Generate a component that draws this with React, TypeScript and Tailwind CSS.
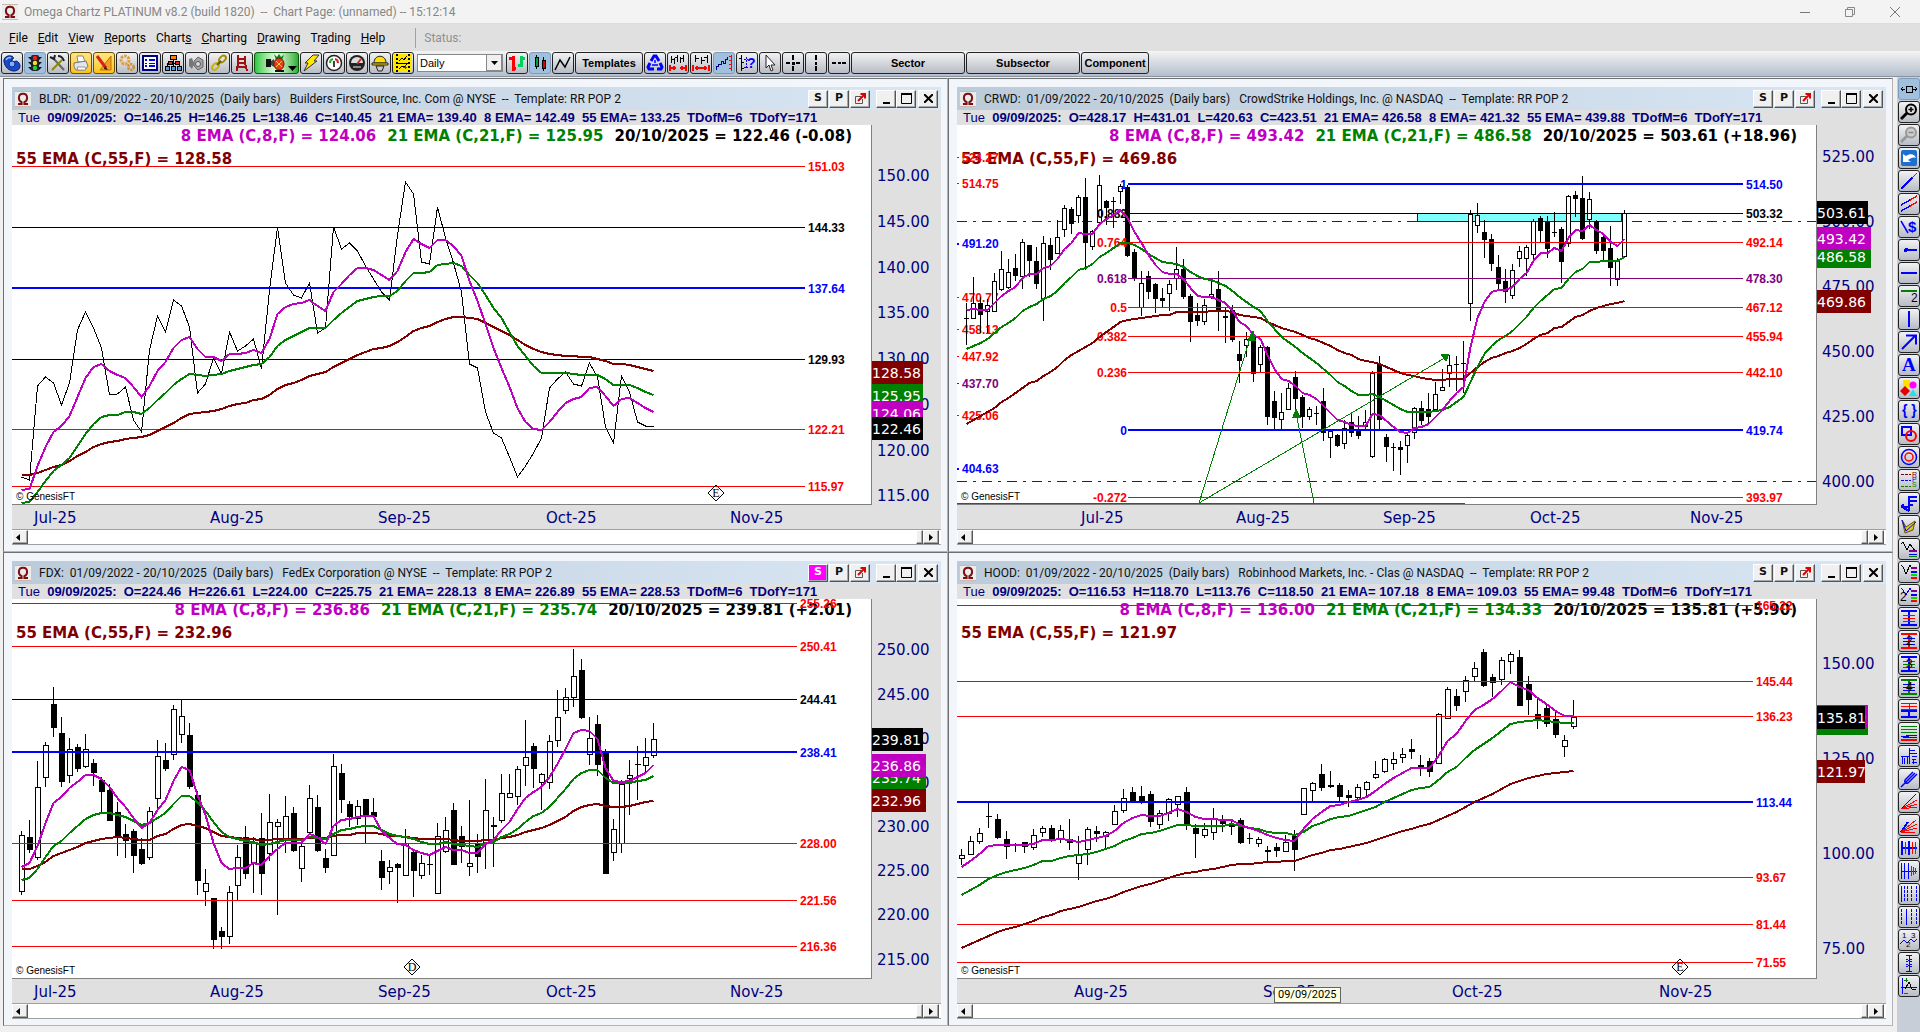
import type { ReactNode } from 'react';

type Candle = [high: number, top: number, bottom: number, low: number, down: 0 | 1];
type Level = { y: number; color: string; label: string; ratio?: string; bold?: boolean };
type Tag = { y: number; text: string; color: string; width: number };
type Mark = { x: number; letter: string };

type Chart = {
  symbol: string;
  name: string;
  info: string;
  flagged?: boolean;
  ema8: string;
  ema21: string;
  ema55: string;
  last: string;
  origin: number;
  firstX: number;
  step: number;
  bodyWidth: number;
  closes?: number[];
  candles?: Candle[];
  fast: number[];
  mid: number[];
  slow: number[];
  lineStart: number;
  lineEnd: number;
  levels: Level[];
  leftLevels?: Level[];
  axis: { y: number; perUnit: number; price: number; major: number; minor: number; from: number; to: number };
  tags: Tag[];
  months: { x: number; text: string }[];
  marks: Mark[];
  annotated?: boolean;
  tooltip?: string;
};

const MAGENTA = '#c000c0';
const GREEN = '#008000';
const MAROON = '#800000';
const RED = '#ff0000';
const BLUE = '#0000ff';
const NAVY = '#000080';
const PURPLE = '#800080';

// Series values are stored at three units per pixel, measured down from each chart's origin.
const CHARTS: Chart[] = [
  {
    symbol: 'BLDR',
    name: 'Builders FirstSource, Inc. Com @ NYSE',
    info: 'O=146.25  H=146.25  L=138.46  C=140.45  21 EMA= 139.40  8 EMA= 142.49  55 EMA= 133.25  TDofM=6  TDofY=171',
    ema8: '124.06', ema21: '125.95', ema55: '128.58', last: '122.46 (-0.08)',
    origin: 45, firstX: 9, step: 8, bodyWidth: 6,
    closes: [
      1102, 1110, 829, 802, 819, 885, 820, 660, 605, 655, 715, 856, 853, 832, 930, 967, 720, 617, 665, 569,
      588, 650, 850, 822, 744, 792, 665, 724, 708, 686, 778, 540, 350, 520, 555, 565, 520, 670, 655, 350,
      416, 398, 422, 468, 508, 545, 571, 375, 217, 252, 457, 463, 290, 385, 460, 545, 762, 775, 905, 970,
      985, 1040, 1102, 1068, 1028, 985, 835, 808, 785, 822, 829, 758, 800, 950, 1000, 797, 845, 935, 948, 952,
    ],
    fast: [
      1140, 1136, 1067, 1010, 967, 948, 918, 860, 803, 772, 762, 782, 796, 805, 832, 861, 828, 784, 757, 715,
      689, 680, 717, 740, 741, 752, 732, 731, 728, 719, 729, 688, 612, 592, 583, 580, 570, 589, 603, 547,
      521, 494, 475, 474, 481, 496, 511, 484, 425, 386, 403, 414, 390, 391, 407, 438, 512, 573, 643, 715,
      775, 830, 895, 937, 957, 961, 935, 907, 878, 866, 860, 835, 830, 857, 888, 867, 863, 880, 895, 906,
    ],
    mid: [
      1179, 1175, 1145, 1112, 1084, 1066, 1045, 1008, 972, 942, 922, 916, 914, 906, 907, 912, 895, 871, 849, 826,
      806, 791, 796, 797, 794, 792, 782, 776, 770, 765, 762, 742, 708, 691, 679, 667, 655, 654, 654, 630,
      610, 590, 574, 566, 561, 558, 558, 542, 512, 490, 488, 485, 465, 461, 459, 468, 494, 520, 555, 594,
      625, 665, 708, 738, 768, 789, 789, 789, 790, 793, 795, 795, 795, 808, 825, 825, 825, 835, 846, 856,
    ],
    slow: [
      1095, 1095, 1088, 1079, 1070, 1064, 1054, 1039, 1025, 1011, 1001, 995, 992, 986, 983, 981, 974, 962, 950, 938,
      923, 913, 910, 907, 902, 898, 889, 883, 878, 871, 868, 856, 838, 826, 818, 809, 799, 793, 787, 772,
      760, 748, 736, 727, 718, 713, 707, 695, 680, 664, 655, 649, 637, 628, 622, 620, 625, 628, 639, 652,
      663, 676, 690, 706, 718, 727, 731, 734, 737, 739, 741, 742, 746, 752, 761, 763, 766, 772, 778, 783,
    ],
    lineStart: 0, lineEnd: 793,
    levels: [
      { y: 169, color: RED, label: '151.03' },
      { y: 352, color: '#000', label: '144.33' },
      { y: 534, color: BLUE, label: '137.64', bold: true },
      { y: 748, color: '#000', label: '129.93' },
      { y: 958, color: RED, label: '122.21' },
      { y: 1129, color: RED, label: '115.97' },
    ],
    axis: { y: 196, perUnit: 27.43, price: 150, major: 5, minor: 1, from: 115, to: 155 },
    tags: [
      { y: 785, text: '128.58', color: MAROON, width: 51 },
      { y: 856, text: '125.95', color: GREEN, width: 51 },
      { y: 908, text: '124.06', color: MAGENTA, width: 51 },
      { y: 953, text: '122.46', color: '#000', width: 51 },
    ],
    months: [
      { x: 22, text: 'Jul-25' }, { x: 198, text: 'Aug-25' }, { x: 366, text: 'Sep-25' },
      { x: 534, text: 'Oct-25' }, { x: 718, text: 'Nov-25' },
    ],
    marks: [{ x: 704, letter: 'E' }],
  },
  {
    symbol: 'CRWD',
    name: 'CrowdStrike Holdings, Inc. @ NASDAQ',
    info: 'O=428.17  H=431.01  L=420.63  C=423.51  21 EMA= 426.58  8 EMA= 421.32  55 EMA= 439.88  TDofM=6  TDofY=171',
    ema8: '493.42', ema21: '486.58', ema55: '469.86', last: '503.61 (+18.96)',
    origin: 135, firstX: 9, step: 7, bodyWidth: 5,
    candles: [
      [670, 714, 718, 795, 1], [592, 669, 713, 713, 0], [650, 669, 704, 758, 1], [658, 676, 694, 758, 0],
      [580, 604, 692, 692, 0], [514, 568, 628, 634, 0], [538, 576, 620, 628, 0], [523, 564, 587, 602, 1],
      [478, 487, 588, 628, 0], [495, 495, 543, 590, 1], [500, 543, 612, 626, 1], [468, 490, 653, 724, 0],
      [475, 495, 540, 570, 1], [420, 472, 518, 522, 0], [376, 385, 448, 472, 0], [382, 387, 432, 462, 1],
      [346, 352, 404, 428, 0], [294, 351, 488, 570, 1], [450, 454, 497, 510, 0], [285, 316, 425, 425, 0],
      [360, 362, 384, 434, 1], [352, 363, 366, 444, 1], [312, 319, 332, 372, 0], [316, 321, 527, 530, 1],
      [508, 516, 597, 602, 1], [573, 610, 682, 708, 0], [573, 588, 636, 658, 1], [608, 612, 657, 700, 1],
      [625, 654, 662, 682, 1], [600, 613, 640, 692, 0], [502, 568, 594, 630, 0], [537, 568, 651, 657, 1],
      [642, 648, 726, 785, 1], [669, 704, 722, 738, 1], [656, 676, 722, 734, 0], [604, 643, 650, 656, 0],
      [573, 627, 690, 752, 1], [682, 708, 713, 788, 1], [676, 690, 780, 785, 1], [782, 822, 843, 908, 1],
      [757, 778, 794, 830, 0], [765, 770, 881, 905, 1], [795, 802, 853, 878, 0], [798, 802, 1011, 1034, 1],
      [934, 963, 1013, 1047, 1], [940, 997, 1018, 1047, 0], [908, 925, 986, 990, 0], [872, 891, 956, 990, 1],
      [945, 951, 1011, 1044, 1], [982, 988, 1007, 1020, 0], [978, 999, 1003, 1035, 1], [925, 963, 1060, 1082, 1],
      [1048, 1054, 1070, 1133, 0], [1062, 1066, 1098, 1100, 1], [1020, 1045, 1088, 1106, 0], [1003, 1025, 1058, 1070, 1],
      [1008, 1050, 1068, 1076, 1], [990, 1027, 1038, 1050, 0], [872, 878, 1127, 1133, 0], [828, 853, 1020, 1048, 1],
      [1063, 1071, 1101, 1146, 1], [1090, 1100, 1103, 1173, 1], [1084, 1100, 1110, 1185, 1], [1062, 1066, 1094, 1150, 0],
      [980, 985, 1056, 1076, 0], [962, 985, 1022, 1034, 1], [938, 987, 1010, 1028, 1], [905, 943, 986, 993, 0],
      [867, 922, 929, 932, 0], [825, 856, 880, 922, 0], [828, 851, 855, 932, 1], [782, 849, 853, 938, 1],
      [390, 403, 668, 722, 0], [369, 406, 434, 459, 0], [421, 456, 480, 534, 1], [463, 477, 551, 572, 1],
      [526, 561, 611, 628, 1], [567, 603, 636, 669, 1], [552, 571, 644, 656, 0], [498, 514, 533, 560, 0],
      [495, 500, 533, 588, 0], [417, 424, 521, 540, 0], [407, 415, 452, 488, 1], [408, 425, 507, 534, 1],
      [397, 456, 460, 470, 1], [441, 447, 545, 608, 1], [346, 347, 490, 501, 0], [333, 345, 356, 410, 1],
      [288, 354, 476, 480, 1], [337, 358, 416, 446, 0], [420, 424, 512, 521, 1], [465, 470, 512, 540, 1],
      [437, 504, 563, 617, 1], [535, 542, 596, 617, 0], [390, 398, 529, 532, 0],
    ],
    fast: [
      689, 686, 689, 689, 670, 647, 633, 620, 593, 582, 583, 565, 559, 538, 508, 490, 459, 461, 461, 432,
      418, 405, 390, 415, 455, 490, 524, 555, 577, 581, 581, 597, 624, 648, 651, 651, 660, 670, 694, 727,
      739, 765, 778, 825, 868, 898, 903, 917, 938, 946, 958, 978, 1000, 1020, 1026, 1034, 1038, 1038, 1002, 1004,
      1022, 1040, 1057, 1058, 1043, 1040, 1033, 1012, 990, 962, 940, 920, 800, 714, 665, 637, 631, 630, 622, 598,
      578, 542, 520, 518, 504, 512, 475, 450, 452, 434, 450, 462, 486, 498, 476,
    ],
    mid: [
      806, 798, 790, 776, 760, 742, 728, 715, 694, 680, 673, 658, 648, 632, 608, 592, 570, 563, 553, 532,
      518, 505, 490, 490, 496, 508, 522, 533, 545, 550, 553, 560, 575, 588, 597, 601, 608, 617, 632, 652,
      665, 682, 694, 723, 748, 772, 787, 802, 820, 834, 850, 868, 886, 905, 918, 932, 944, 946, 943, 952,
      963, 975, 988, 996, 996, 996, 996, 994, 989, 980, 966, 952, 905, 860, 823, 798, 780, 768, 752, 732,
      710, 684, 662, 646, 628, 623, 598, 575, 566, 547, 545, 542, 542, 542, 530,
    ],
    slow: [
      1031, 1019, 1009, 997, 983, 967, 954, 940, 924, 910, 902, 888, 876, 861, 841, 826, 812, 800, 788, 770,
      757, 742, 727, 721, 716, 713, 710, 708, 706, 704, 697, 695, 695, 695, 695, 694, 692, 693, 697, 704,
      707, 712, 715, 726, 736, 744, 750, 757, 766, 773, 780, 790, 798, 810, 819, 826, 836, 844, 846, 852,
      860, 870, 878, 885, 889, 893, 898, 899, 899, 898, 896, 897, 878, 860, 846, 834, 829, 820, 812, 803,
      791, 778, 765, 758, 744, 740, 726, 712, 704, 692, 685, 679, 673, 670, 662,
    ],
    lineStart: 171, lineEnd: 786,
    levels: [
      { y: 312, color: BLUE, label: '514.50', ratio: '1', bold: true },
      { y: 400, color: '#000', label: '503.32', ratio: '0.882' },
      { y: 487, color: RED, label: '492.14', ratio: '0.764' },
      { y: 595, color: PURPLE, label: '478.30', ratio: '0.618' },
      { y: 682, color: RED, label: '467.12', ratio: '0.5' },
      { y: 769, color: RED, label: '455.94', ratio: '0.382' },
      { y: 877, color: RED, label: '442.10', ratio: '0.236' },
      { y: 1050, color: BLUE, label: '419.74', ratio: '0', bold: true },
      { y: 1252, color: RED, label: '393.97', ratio: '-0.272' },
    ],
    leftLevels: [
      { y: 235, color: RED, label: '524.27' },
      { y: 311, color: RED, label: '514.75' },
      { y: 493, color: BLUE, label: '491.20', bold: true },
      { y: 653, color: RED, label: '470.77' },
      { y: 751, color: RED, label: '458.13' },
      { y: 832, color: RED, label: '447.92' },
      { y: 911, color: PURPLE, label: '437.70' },
      { y: 1009, color: RED, label: '425.06' },
      { y: 1168, color: BLUE, label: '404.63', bold: true },
    ],
    axis: { y: 229, perUnit: 7.8, price: 525, major: 25, minor: 5, from: 395, to: 530 },
    tags: [
      { y: 397, text: '503.61', color: '#000', width: 51 },
      { y: 529, text: '486.58', color: GREEN, width: 54 },
      { y: 475, text: '493.42', color: MAGENTA, width: 54 },
      { y: 662, text: '469.86', color: MAROON, width: 54 },
    ],
    months: [
      { x: 124, text: 'Jul-25' }, { x: 279, text: 'Aug-25' }, { x: 426, text: 'Sep-25' },
      { x: 573, text: 'Oct-25' }, { x: 733, text: 'Nov-25' },
    ],
    marks: [],
    annotated: true,
  },
  {
    symbol: 'FDX',
    name: 'FedEx Corporation @ NYSE',
    info: 'O=224.46  H=226.61  L=224.00  C=225.75  21 EMA= 228.13  8 EMA= 226.89  55 EMA= 228.53  TDofM=6  TDofY=171',
    flagged: true,
    ema8: '236.86', ema21: '235.74', ema55: '232.96', last: '239.81 (+2.01)',
    origin: 147, firstX: 9, step: 8, bodyWidth: 6,
    candles: [
      [843, 856, 1022, 1034, 0], [810, 861, 900, 908, 1], [633, 712, 922, 930, 0], [576, 586, 680, 710, 0],
      [411, 462, 533, 560, 1], [501, 549, 696, 710, 1], [564, 598, 674, 698, 0], [582, 591, 657, 665, 1],
      [552, 598, 647, 653, 0], [628, 639, 668, 707, 1], [680, 689, 726, 790, 1], [702, 720, 812, 812, 1],
      [756, 786, 861, 918, 1], [822, 852, 873, 924, 1], [836, 843, 918, 969, 1], [864, 897, 942, 945, 1],
      [772, 784, 920, 930, 0], [570, 619, 743, 784, 0], [580, 630, 657, 662, 1], [465, 478, 611, 630, 0],
      [450, 499, 553, 578, 0], [519, 555, 711, 716, 1], [722, 735, 993, 1034, 1], [957, 1000, 1022, 1068, 0],
      [1044, 1044, 1170, 1196, 1], [1132, 1143, 1161, 1196, 1], [1008, 1027, 1157, 1182, 0], [885, 922, 1004, 1050, 0],
      [828, 861, 972, 986, 1], [860, 880, 935, 1028, 0], [790, 864, 972, 1034, 1], [732, 817, 908, 934, 0],
      [808, 815, 829, 1095, 0], [738, 799, 870, 910, 0], [772, 789, 903, 906, 1], [870, 889, 953, 996, 0],
      [705, 745, 846, 850, 0], [735, 771, 903, 906, 1], [897, 924, 954, 968, 1], [612, 649, 914, 914, 0],
      [642, 669, 750, 790, 1], [754, 762, 801, 830, 1], [750, 769, 805, 824, 0], [747, 747, 798, 880, 1],
      [744, 786, 801, 805, 1], [900, 933, 984, 1020, 1], [930, 952, 962, 1002, 0], [940, 942, 954, 1058, 1],
      [837, 880, 974, 978, 0], [900, 906, 963, 1041, 1], [914, 940, 974, 987, 0], [914, 942, 945, 974, 1],
      [819, 859, 1030, 1030, 0], [800, 841, 902, 908, 0], [759, 780, 945, 945, 1], [828, 857, 890, 938, 1],
      [750, 940, 947, 978, 0], [852, 880, 920, 969, 1], [687, 781, 878, 957, 0], [801, 826, 830, 951, 1],
      [672, 730, 811, 818, 0], [672, 730, 742, 742, 0], [648, 658, 739, 764, 0], [510, 622, 644, 707, 0],
      [579, 587, 657, 714, 1], [668, 673, 695, 780, 0], [555, 574, 695, 716, 0], [420, 502, 569, 590, 0],
      [414, 442, 481, 491, 0], [297, 379, 440, 471, 0], [327, 360, 504, 507, 1], [501, 565, 611, 644, 0],
      [495, 521, 645, 678, 1], [597, 607, 972, 972, 1], [807, 838, 905, 933, 0], [690, 703, 880, 908, 0],
      [630, 676, 683, 795, 0], [588, 643, 646, 750, 1], [564, 622, 646, 668, 0], [519, 568, 614, 624, 0],
    ],
    fast: [
      951, 940, 889, 820, 758, 741, 713, 696, 675, 675, 686, 712, 743, 772, 805, 833, 820, 780, 750, 692,
      651, 660, 735, 795, 880, 940, 957, 954, 953, 938, 944, 918, 897, 879, 878, 879, 851, 861, 881, 828,
      811, 808, 801, 798, 798, 843, 865, 882, 885, 899, 910, 915, 904, 891, 899, 900, 908, 908, 883, 870,
      840, 815, 776, 744, 725, 712, 682, 643, 597, 550, 540, 543, 566, 655, 694, 695, 694, 682, 668, 646,
    ],
    mid: [
      989, 983, 958, 922, 889, 872, 848, 829, 808, 796, 788, 790, 796, 802, 813, 825, 820, 803, 790, 762,
      738, 738, 756, 782, 815, 846, 862, 868, 873, 876, 885, 881, 875, 871, 870, 869, 860, 863, 866, 852,
      841, 838, 832, 829, 827, 840, 851, 858, 860, 868, 877, 882, 882, 877, 881, 884, 889, 891, 880, 876,
      862, 853, 836, 815, 799, 788, 770, 745, 718, 687, 670, 660, 659, 685, 698, 699, 698, 694, 689, 677,
    ],
    slow: [
      957, 956, 948, 935, 918, 909, 900, 891, 879, 873, 867, 865, 862, 864, 866, 870, 869, 859, 851, 838,
      826, 822, 828, 835, 847, 857, 862, 865, 867, 868, 873, 871, 868, 867, 867, 867, 863, 865, 864, 859,
      856, 854, 850, 848, 849, 853, 857, 859, 860, 863, 866, 868, 868, 868, 871, 873, 873, 873, 871, 870,
      864, 860, 854, 845, 840, 833, 824, 812, 800, 783, 771, 766, 762, 769, 771, 770, 767, 761, 757, 752,
    ],
    lineStart: 0, lineEnd: 785,
    levels: [
      { y: 160, color: RED, label: '255.26' },
      { y: 289, color: RED, label: '250.41' },
      { y: 448, color: '#000', label: '244.41' },
      { y: 606, color: BLUE, label: '238.41', bold: true },
      { y: 880, color: RED, label: '228.00' },
      { y: 1051, color: RED, label: '221.56' },
      { y: 1189, color: RED, label: '216.36' },
    ],
    axis: { y: 298, perUnit: 26.5, price: 250, major: 5, minor: 1, from: 213, to: 255 },
    tags: [
      { y: 568, text: '239.81', color: '#000', width: 51 },
      { y: 680, text: '235.74', color: GREEN, width: 54 },
      { y: 646, text: '236.86', color: MAGENTA, width: 54 },
      { y: 751, text: '232.96', color: MAROON, width: 54 },
    ],
    months: [
      { x: 22, text: 'Jul-25' }, { x: 198, text: 'Aug-25' }, { x: 366, text: 'Sep-25' },
      { x: 534, text: 'Oct-25' }, { x: 718, text: 'Nov-25' },
    ],
    marks: [{ x: 400, letter: 'D' }],
  },
  {
    symbol: 'HOOD',
    name: 'Robinhood Markets, Inc. - Clas @ NASDAQ',
    info: 'O=116.53  H=118.70  L=113.76  C=118.50  21 EMA= 107.18  8 EMA= 109.03  55 EMA= 99.48  TDofM=6  TDofY=171',
    ema8: '136.00', ema21: '134.33', ema55: '121.97', last: '135.81 (+5.90)',
    origin: 147, firstX: 4, step: 9, bodyWidth: 6,
    candles: [
      [897, 915, 923, 945, 0], [858, 874, 912, 914, 0], [834, 850, 872, 882, 0], [757, 799, 801, 834, 1],
      [792, 807, 864, 867, 1], [843, 867, 890, 927, 1], [878, 884, 887, 906, 1], [875, 877, 890, 909, 1],
      [837, 856, 892, 900, 0], [828, 835, 845, 860, 0], [824, 834, 874, 876, 1], [826, 841, 868, 878, 0],
      [807, 868, 879, 900, 1], [858, 914, 938, 990, 0], [832, 838, 898, 945, 0], [828, 843, 852, 876, 1],
      [843, 847, 858, 896, 0], [765, 784, 821, 826, 0], [717, 745, 781, 788, 0], [711, 726, 756, 756, 1],
      [708, 738, 754, 762, 1], [723, 732, 816, 830, 1], [780, 790, 821, 838, 0], [745, 748, 790, 814, 0],
      [738, 739, 763, 800, 0], [711, 726, 824, 840, 1], [822, 834, 852, 924, 1], [818, 838, 854, 864, 0],
      [774, 804, 847, 870, 0], [796, 806, 822, 846, 1], [806, 826, 832, 854, 0], [804, 810, 879, 881, 1],
      [848, 864, 868, 882, 1], [860, 866, 880, 890, 0], [889, 901, 907, 938, 0], [880, 891, 902, 921, 1],
      [855, 877, 902, 905, 0], [840, 858, 900, 963, 1], [714, 715, 791, 796, 0], [696, 700, 721, 760, 0],
      [642, 672, 714, 722, 1], [663, 706, 710, 714, 1], [699, 705, 741, 756, 1], [720, 735, 743, 770, 1],
      [702, 712, 740, 750, 0], [693, 697, 716, 742, 0], [633, 673, 682, 686, 0], [624, 628, 664, 670, 0],
      [606, 628, 640, 659, 0], [594, 613, 622, 638, 0], [567, 597, 606, 626, 1], [615, 645, 650, 678, 1],
      [624, 633, 665, 680, 1], [489, 493, 640, 642, 0], [412, 418, 505, 508, 0], [418, 438, 467, 482, 1],
      [378, 391, 424, 456, 0], [336, 355, 377, 394, 0], [297, 306, 407, 410, 1], [372, 381, 398, 440, 1],
      [322, 331, 386, 405, 0], [306, 313, 334, 372, 0], [300, 321, 467, 467, 1], [378, 402, 449, 494, 1],
      [446, 492, 510, 536, 1], [462, 474, 521, 531, 1], [480, 506, 554, 563, 1], [555, 571, 589, 621, 0],
      [450, 502, 529, 536, 0],
    ],
    fast: [
      950, 933, 913, 887, 884, 884, 884, 884, 881, 870, 870, 867, 869, 877, 869, 864, 857, 843, 820, 804,
      794, 798, 797, 790, 776, 785, 802, 806, 806, 809, 810, 826, 834, 842, 856, 865, 869, 873, 838, 808,
      787, 768, 764, 757, 750, 740, 723, 702, 684, 669, 654, 653, 653, 618, 574, 551, 514, 479, 464, 448,
      422, 397, 412, 420, 443, 461, 482, 497, 497,
    ],
    mid: [
      1035, 1021, 1005, 987, 975, 966, 961, 955, 946, 934, 932, 923, 917, 914, 911, 905, 898, 889, 874, 863,
      852, 849, 843, 834, 825, 826, 828, 828, 828, 827, 823, 829, 834, 838, 845, 848, 850, 856, 845, 829,
      818, 808, 802, 797, 790, 781, 771, 756, 743, 731, 719, 714, 712, 690, 666, 650, 624, 600, 582, 563,
      543, 523, 517, 512, 510, 514, 517, 519, 519,
    ],
    slow: [
      1193, 1182, 1171, 1159, 1147, 1138, 1130, 1121, 1112, 1102, 1094, 1084, 1078, 1072, 1062, 1054, 1048, 1039, 1027, 1018,
      1008, 1003, 994, 985, 976, 969, 966, 961, 957, 951, 945, 943, 941, 940, 937, 936, 934, 932, 924, 915,
      909, 901, 897, 891, 886, 879, 871, 862, 852, 843, 836, 828, 823, 810, 797, 786, 771, 756, 744, 732,
      717, 703, 693, 684, 678, 673, 670, 667, 662,
    ],
    lineStart: 0, lineEnd: 796,
    levels: [
      { y: 166, color: RED, label: '165.22' },
      { y: 394, color: RED, label: '145.44' },
      { y: 499, color: RED, label: '136.23' },
      { y: 756, color: BLUE, label: '113.44', bold: true },
      { y: 982, color: RED, label: '93.67' },
      { y: 1123, color: RED, label: '81.44' },
      { y: 1237, color: RED, label: '71.55' },
    ],
    axis: { y: 340, perUnit: 11.4, price: 150, major: 25, minor: 5, from: 70, to: 160 },
    tags: [
      { y: 520, text: '134.33', color: GREEN, width: 51 },
      { y: 499, text: '136.00', color: MAGENTA, width: 51 },
      { y: 502, text: '135.81', color: '#000', width: 48 },
      { y: 662, text: '121.97', color: MAROON, width: 48 },
    ],
    months: [
      { x: 117, text: 'Aug-25' }, { x: 306, text: 'Sep-25' }, { x: 495, text: 'Oct-25' }, { x: 702, text: 'Nov-25' },
    ],
    marks: [{ x: 723, letter: 'E' }],
    tooltip: '09/09/2025',
  },
];

/* ---------- icons ---------- */

function Stroke({ d, c = BLUE, w = 1, dash }: { d: string; c?: string; w?: number; dash?: string }) {
  return <path d={d} stroke={c} strokeWidth={w} strokeDasharray={dash} fill="none" />;
}

function Glyph({ children, soft = false }: { children: ReactNode; soft?: boolean }) {
  return (
    <svg viewBox="0 0 18 18" className="h-[18px] w-[18px] shrink-0" shapeRendering={soft ? 'auto' : 'crispEdges'} aria-hidden="true">
      {children}
    </svg>
  );
}

function Omega() {
  return (
    <svg viewBox="0 0 16 16" className="h-4 w-4 shrink-0" aria-hidden="true">
      <rect width="16" height="16" fill="#ececec" />
      <path d="M0 .5h16M0 15.5h16" stroke="#c9b8b0" />
      <path d="M3 13h3.6v-1.800C4.700 10.200 3.900 8.800 3.900 7c0-2.600 1.700-4.300 4.100-4.300S12.100 4.400 12.100 7c0 1.800-.8 3.200-2.700 4.200V13H13" stroke="#7c1010" strokeWidth="2" fill="none" />
    </svg>
  );
}

const MAIN_TOOLS: { label: string; tone?: 'yellow' | 'blue'; icon: ReactNode }[] = [
  {
    label: 'Phone',
    icon: (
      <Glyph soft>
        <path d="M1 8C0 4 4 1 8 2c2 0 3 2 2 3l-2 1 3 2 2-1c2 0 4 3 4 5 0 3-3 5-6 5-5 0-9-4-10-9z" fill="#1c49c8" stroke="#0a1e70" />
        <circle cx="9" cy="10" r="3" fill="#7fb0ff" stroke="#0a2a90" />
        <path d="M3 6c1-2 3-3 5-2" stroke="#9cc4ff" strokeWidth="1.500" fill="none" />
      </Glyph>
    ),
  },
  {
    label: 'Traffic light',
    tone: 'blue',
    icon: (
      <Glyph soft>
        <path d="M2 3h14l-3 3H5zM2 8h14l-3 3H5zM2 13h14l-3 3H5z" fill="#111" />
        <rect x="5" y="1" width="8" height="16" rx="2" fill="#222" />
        <circle cx="9" cy="4" r="2.200" fill="#f02020" />
        <circle cx="9" cy="9" r="2.200" fill="#f4e020" />
        <circle cx="9" cy="14" r="2.200" fill="#20d040" />
      </Glyph>
    ),
  },
  {
    label: 'Tools',
    icon: (
      <Glyph soft>
        <Stroke d="M4 4l11 12" c="#666" w={2} />
        <Stroke d="M13 6L3 16" c="#8a8a00" w={2} />
        <Stroke d="M9 2c3 0 5 2 6 5M1 3l4 2 1-4" c="#222" w={2} />
      </Glyph>
    ),
  },
  {
    label: 'Print',
    tone: 'yellow',
    icon: (
      <Glyph soft>
        <path d="M5 2h6l2 6H6z" fill="#fff" stroke="#888" />
        <path d="M2 9l12-2 2 5-3 4H4l-2-3z" fill="#e4e4ee" stroke="#777" />
        <path d="M5 13h8l1 3H6z" fill="#fff" stroke="#999" />
      </Glyph>
    ),
  },
  {
    label: 'Draw',
    tone: 'yellow',
    icon: (
      <Glyph soft>
        <path d="M16 2v14H5z" fill="#f0a020" stroke="#c07000" />
        <path d="M2 2l9 12" stroke="#d82020" strokeWidth="3" />
        <path d="M10 12l3 4-4-1z" fill="#222" />
      </Glyph>
    ),
  },
  {
    label: 'Settings',
    icon: (
      <Glyph soft>
        <circle cx="7" cy="6" r="4" fill="none" stroke="#e0a040" strokeWidth="3" strokeDasharray="2.500 1" />
        <circle cx="13" cy="13" r="2.800" fill="none" stroke="#d08a28" strokeWidth="2.500" strokeDasharray="2 1" />
      </Glyph>
    ),
  },
  {
    label: 'List',
    icon: (
      <Glyph>
        <rect x="2" y="2" width="14" height="14" fill="#fff" stroke={NAVY} strokeWidth="2" />
        <Stroke d="M4 6h2M4 12h2M8 6h6M8 12h6" w={2} />
        <Stroke d="M4 9h2M8 9h6" />
      </Glyph>
    ),
  },
  {
    label: 'Tree',
    icon: (
      <Glyph>
        <Stroke d="M9 4v9M3 12V9h12v3" c="#000" />
        <path d="M6 1h6v4H6z" fill="#ff8000" stroke="#000" />
        <path d="M4 7h4v3H4zM11 7h4v3h-4z" fill="#f02020" stroke="#000" />
        <path d="M1 12h4v4H1zM7 12h4v4H7zM13 12h4v4h-4z" fill="#40a0ff" stroke="#000" />
      </Glyph>
    ),
  },
  {
    label: 'Camera',
    icon: (
      <Glyph soft>
        <path d="M2 5l3-1 2 6-2 5-3-3z" fill="#777" />
        <path d="M7 7l4-4 5 3v7l-5 3-4-4z" fill="#a4a4a4" stroke="#666" />
        <circle cx="11" cy="10" r="2.500" fill="#ddd" stroke="#555" />
      </Glyph>
    ),
  },
  {
    label: 'Link',
    icon: (
      <Glyph soft>
        <ellipse cx="12.500" cy="5" rx="4" ry="2.600" transform="rotate(-45 12.500 5)" fill="none" stroke="#a09000" strokeWidth="2" />
        <ellipse cx="5.500" cy="12.500" rx="4" ry="2.600" transform="rotate(-45 5.500 12.500)" fill="none" stroke="#c8b400" strokeWidth="2" />
        <Stroke d="M7 11l4-4" c="#665c00" w={2} />
      </Glyph>
    ),
  },
  {
    label: 'Ladder',
    icon: (
      <Glyph>
        <Stroke d="M5 1v7l-1 9M12 2v7l2 8M5 5h7M5 9h7M4 13h9" c="#a01010" w={2} />
      </Glyph>
    ),
  },
];

const STATUS_TOOLS: { label: string; icon: ReactNode }[] = [
  {
    label: 'Quick',
    icon: (
      <Glyph soft>
        <path d="M11 1h6l-5 6h3L2 17l4-8H3z" fill="#ffe800" stroke="#333" />
      </Glyph>
    ),
  },
  {
    label: 'Gauge',
    icon: (
      <Glyph soft>
        <circle cx="9" cy="9" r="7.500" fill="#fff" stroke="#222" strokeWidth="1.500" />
        <path d="M5 9a4 4 0 013-4" stroke="#20b020" strokeWidth="2" fill="none" />
        <path d="M10 5a4 4 0 013 4" stroke="#e02020" strokeWidth="2" fill="none" />
        <Stroke d="M9 13V7" c="#000" w={1.5} />
      </Glyph>
    ),
  },
  {
    label: 'Dial',
    icon: (
      <Glyph soft>
        <circle cx="9" cy="9" r="8" fill="#222" />
        <path d="M3 9a6 6 0 0112 0z" fill="#ddd" />
        <Stroke d="M9 10l4-5" c="#e02020" w={2} />
        <rect x="5" y="12" width="8" height="2" fill="#888" />
      </Glyph>
    ),
  },
  {
    label: 'Safety',
    icon: (
      <Glyph soft>
        <path d="M3 9C3 0 15 0 15 9z" fill="#ffe000" stroke="#222" />
        <path d="M1 9h16v2H1z" fill="#ffe000" stroke="#222" />
        <path d="M5 12h8l-2 5H7z" fill="#ccc" stroke="#222" />
      </Glyph>
    ),
  },
  {
    label: 'Strip',
    icon: (
      <Glyph>
        <rect x="0" y="0" width="18" height="18" fill="#ffe600" />
        <Stroke d="M3 0v18M15 0v18" c="#000" dash="2 2" w={2} />
        <Stroke d="M5 7l3-3 2 2 3-4M5 15l3-3 2 1 3-3M4 9h10" c="#000" />
        <Stroke d="M9 13h4M11 11v4" c={RED} />
      </Glyph>
    ),
  },
];

const STYLE_TOOLS: { label: string; tone?: 'blue'; icon: ReactNode }[] = [
  {
    label: 'Bars',
    icon: (
      <Glyph>
        <Stroke d="M5 2v15M1 4h4M5 14h3" c={RED} w={3} />
        <Stroke d="M13 2v11M10 11h3M13 4h4" c="#00d060" w={3} />
      </Glyph>
    ),
  },
  {
    label: 'Candles',
    tone: 'blue',
    icon: (
      <Glyph>
        <Stroke d="M5.500 1v14M12.500 3v14" c="#000" />
        <rect x="4.500" y="3.500" width="3" height="9" fill="#00a040" stroke="#000" />
        <rect x="11.500" y="6.500" width="3" height="8" fill="#e00000" stroke="#000" />
      </Glyph>
    ),
  },
  { label: 'Line', icon: <Glyph soft><Stroke d="M1 16L6 6l5 7 5-10" c="#000" w={1.5} /></Glyph> },
];

const CURSOR_TOOLS: { label: string; tone?: 'blue'; icon: ReactNode }[] = [
  {
    label: 'Recycle',
    icon: (
      <Glyph soft>
        <Stroke d="M5 7l3-5h2l3 5M14 9l2 4-1 2h-4M8 15H3l-1-2 2-4" w={3} />
        <Stroke d="M6 11h6M9 6v3" w={1.5} />
      </Glyph>
    ),
  },
  {
    label: 'Compress',
    icon: (
      <Glyph>
        <Stroke d="M2 2v7M5 4v6M8 1v7M11 3v6M14 1v7M3 5h2M6 3h2M12 4h2" c="#000" />
        <Stroke d="M1 11v6M17 11v6M2 14h5M11 14h5M5 12v4M13 12v4" c={RED} w={1.5} />
      </Glyph>
    ),
  },
  {
    label: 'Expand',
    icon: (
      <Glyph>
        <Stroke d="M3 1v7M9 3v7M15 1v8M4 4h3M10 6h3M12 3h3" c="#000" />
        <Stroke d="M1 11v6M17 11v6M3 14h12M5 12v4M13 12v4" c={RED} w={1.5} />
      </Glyph>
    ),
  },
  {
    label: 'Scale',
    tone: 'blue',
    icon: (
      <Glyph>
        <Stroke d="M1 16v-4h2v-2h3V7h2v2h2V5h2V3" c={NAVY} />
        <Stroke d="M16 1v16M14 2h3M14 6h3M14 10h3M14 14h3" c={RED} />
      </Glyph>
    ),
  },
  {
    label: 'Explain',
    icon: (
      <Glyph>
        <Stroke d="M3 1v16M1 4h2M3 8h3M3 14h3" c="#000" />
        <Stroke d="M8 3v12M6 5h4M6 13h4" dash="2 1" />
        <text x="9" y="14" fill={BLUE} className="font-['Liberation_Sans'] text-[14px] font-bold">?</text>
      </Glyph>
    ),
  },
  {
    label: 'Pointer',
    icon: (
      <Glyph soft>
        <path d="M5 1v13l3-3 2 6 2-1-2-5h4z" fill="#fff" stroke="#222" />
      </Glyph>
    ),
  },
  { label: 'Cross', icon: <Glyph><Stroke d="M9 1v5M9 12v5M2 9h4M12 9h4" c="#000" w={2} /><rect x="8" y="8" width="3" height="3" /></Glyph> },
  { label: 'Vertical', icon: <Glyph><Stroke d="M9 1v5M9 12v5" c="#000" w={2} /><rect x="8" y="8" width="2" height="3" /></Glyph> },
  { label: 'Horizontal', icon: <Glyph><Stroke d="M2 9h4M12 9h4" c="#000" w={2} /><rect x="8" y="8" width="3" height="2" /></Glyph> },
];

const Num = ({ children, x = 6, y = 13 }: { children: string; x?: number; y?: number }) => (
  <text x={x} y={y} fill="#000" className="font-['Liberation_Sans'] text-[12px]">{children}</text>
);

const SIDE_TOOLS: { label: string; active?: boolean; icon: ReactNode }[] = [
  { label: 'Fit', active: true, icon: <Glyph><Stroke d="M6 6h6v6H6zM1 9h4M13 9h4M3 7L1 9l2 2M15 7l2 2-2 2" c="#000" /></Glyph> },
  { label: 'Zoom in', icon: <Glyph soft><circle cx="11" cy="6.500" r="5" fill="#ddd" stroke="#000" strokeWidth="2" /><Stroke d="M7 10l-6 6" c="#000" w={3} /><Stroke d="M8.500 6.500h5M11 4v5" c="#000" w={1.5} /></Glyph> },
  { label: 'Zoom out', icon: <Glyph soft><circle cx="11" cy="6.500" r="5" fill="#ccc" stroke="#999" strokeWidth="2" /><Stroke d="M7 10l-6 6" c="#999" w={3} /><Stroke d="M8.500 6.500h5" c="#888" w={1.5} /></Glyph> },
  { label: 'Undo', icon: <Glyph soft><rect x="1" y="1" width="16" height="16" rx="2" fill="#1e6fd0" /><path d="M3 5v8h8L8 11c3-2 5-3 8-2-1-4-6-5-10-2z" fill="#fff" /></Glyph> },
  { label: 'Trend line', icon: <Glyph><Stroke d="M1 17L12 6" w={2} /><Stroke d="M12 6l5-5" c={RED} /></Glyph> },
  { label: 'Channel', icon: <Glyph><Stroke d="M1 10l9-5M1 16l9-5" w={1.500} /><Stroke d="M10 5l7-4M10 11l7-4" c={RED} w={1.500} /></Glyph> },
  { label: 'Price line', icon: <Glyph soft><Stroke d="M1 3l7 12" w={1.500} /><text x="8" y="14" fill={BLUE} className="font-['Liberation_Sans'] text-[15px] font-bold">$</text></Glyph> },
  { label: 'Ray', icon: <Glyph><Stroke d="M5 9h12" w={2} /><circle cx="6" cy="9" r="2" fill={BLUE} /></Glyph> },
  { label: 'Horizontal line', icon: <Glyph><Stroke d="M1 9h16" w={2} /></Glyph> },
  { label: 'Level two', icon: <Glyph><Stroke d="M1 4h16" c={GREEN} w={2} /><Num x={11} y={15}>2</Num></Glyph> },
  { label: 'Vertical line', icon: <Glyph><Stroke d="M9 1v16" w={2} /></Glyph> },
  { label: 'Arrow', icon: <Glyph soft><Stroke d="M2 16L15 3M6 2.500h10v9" w={2} /></Glyph> },
  { label: 'Text', icon: <Glyph soft><text x="2" y="15" fill={BLUE} className="font-['Liberation_Serif'] text-[19px] font-bold">A</text></Glyph> },
  { label: 'Shapes', icon: <Glyph soft><rect x="3" y="1" width="7" height="7" fill="#ffe000" /><circle cx="13" cy="6" r="3.500" fill="#ff00ff" /><path d="M5 7l5 5-5 5-5-5z" fill="#e00000" /><path d="M13 10l4 7H9z" fill="#20e0f0" /></Glyph> },
  { label: 'Braces', icon: <Glyph soft><text x="2" y="13" fill={BLUE} className="font-['Liberation_Sans'] text-[14px] font-bold">{'{ }'}</text></Glyph> },
  { label: 'Square and circle', icon: <Glyph soft><Stroke d="M2 2h9v8H2z" w={2} /><circle cx="11" cy="11" r="5" fill="none" stroke={RED} strokeWidth="2" /></Glyph> },
  { label: 'Rings', icon: <Glyph soft><circle cx="9" cy="9" r="7.500" fill="none" stroke={BLUE} strokeWidth="1.500" /><circle cx="9" cy="9" r="4" fill="none" stroke={RED} strokeWidth="1.500" /></Glyph> },
  {
    label: 'Pivots',
    icon: (
      <Glyph>
        <Stroke d="M1 3.500h10" c={MAROON} dash="3 1" /><Stroke d="M1 9.500h10" dash="3 1" /><Stroke d="M1 15.500h10" c={GREEN} dash="3 1" />
        <text x="12" y="6" fill={MAROON} className="font-['Liberation_Sans'] text-[7px]">R</text>
        <text x="12" y="11" fill={BLUE} className="font-['Liberation_Sans'] text-[7px]">P</text>
        <text x="12" y="16" fill={GREEN} className="font-['Liberation_Sans'] text-[7px]">S</text>
      </Glyph>
    ),
  },
  { label: 'Profile', icon: <Glyph><Stroke d="M9 2v15M9 3h8M9 7h8M9 11h4M2 13h7M3 10l-1 3 7 4" w={2} /></Glyph> },
  { label: 'Fans', icon: <Glyph soft><path d="M2 3l4 7 9-6-2 9-8 3z" fill="#d8c820" stroke="#705000" /><Stroke d="M2 3l4 11 10-9" /></Glyph> },
  { label: 'Retrace one', icon: <Glyph><Stroke d="M1 4l2-2 4 8 3-6 5 7" c="#000" /><Stroke d="M9 11h8" c={PURPLE} w={2} /><Stroke d="M9 14h8" w={1} /><Stroke d="M9 16h8" c={GREEN} /></Glyph> },
  { label: 'Retrace two', icon: <Glyph><Stroke d="M1 2l2 2 3 7 4-9 1 2" c="#000" /><Stroke d="M11 5h6" c={PURPLE} w={2} /><Stroke d="M11 9h6" w={2} /><Stroke d="M11 12h6" c="#00e000" w={2} /><Stroke d="M11 15h6" c={RED} w={2} /></Glyph> },
  { label: 'Retrace three', icon: <Glyph><Stroke d="M1 2l2 2 3 5 4-7 1 2" /><Stroke d="M11 5h6" c={PURPLE} w={2} /><Stroke d="M11 9h6" w={2} /><Stroke d="M11 12h6" c="#00e000" w={2} /><Stroke d="M11 15h6" c={RED} w={2} /><Num x={0} y={15}>2</Num></Glyph> },
  { label: 'Range one', icon: <Glyph><Stroke d="M1 2h16M1 16h16M9 2v14" w={2} /><Stroke d="M3 6h12M3 9h12M3 12h12" c={RED} /></Glyph> },
  { label: 'Range two', icon: <Glyph><Stroke d="M1 2h16M1 16h16M9 2v14" c={RED} w={2} /><Stroke d="M3 6h12M3 9h12M3 12h12" /><Num>2</Num></Glyph> },
  { label: 'Range three', icon: <Glyph><Stroke d="M1 2h16M1 16h16M9 2v14" w={2} /><Stroke d="M3 6h12M3 9h12M3 12h12" c={GREEN} /><Num>3</Num></Glyph> },
  { label: 'Range four', icon: <Glyph><Stroke d="M1 2h16M1 16h16M9 2v14" c={GREEN} w={2} /><Stroke d="M3 6h12M3 9h12M3 12h12" /><Num>4</Num></Glyph> },
  { label: 'Extension', icon: <Glyph><Stroke d="M1 2h16M1 5h16M1 8h16M9 2v7" c={RED} /><Stroke d="M1 10h16M1 16h16M9 10v6" w={2} /></Glyph> },
  { label: 'Projection', icon: <Glyph><Stroke d="M1 2h16M1 5h16M1 8h16" c={GREEN} /><Stroke d="M1 12h8M6 11h11M3 13h14" /><Stroke d="M1 16h16" c={RED} w={2} /></Glyph> },
  { label: 'Volume profile', icon: <Glyph><Stroke d="M2 10v7M4 11v6M7 10v7M9 1v16M1 9h9M9 6h8M9 3h6M12 9h5M12 12h4M12 15h5M13 12v5" /></Glyph> },
  { label: 'Pitchfork', icon: <Glyph soft><Stroke d="M5 10l8-8M8 13l9-9M5 10c-1 2 1 4 3 3M1 17L15 3" w={1.500} /></Glyph> },
  { label: 'Speed fan', icon: <Glyph><Stroke d="M1 16L16 1" /><Stroke d="M1 16L17 7M1 16l16-5M1 16l16-2" c={RED} /></Glyph> },
  { label: 'Arc fan', icon: <Glyph><Stroke d="M1 16L8 6" w={2} /><Stroke d="M1 16L16 4M1 16l16-8M1 16l16-4M1 16h14" c={RED} /></Glyph> },
  { label: 'Cycle one', icon: <Glyph><Stroke d="M2 2v14M9 2v14M1 9h16" w={2} /><Stroke d="M5.500 3v12M12.500 3v12M15.500 3v12" c={RED} /></Glyph> },
  { label: 'Cycle two', icon: <Glyph><Stroke d="M1.500 1v16M4.500 1v16M8.500 1v16M1 9.500h16" /><Stroke d="M11.500 4v10M13.500 5v8M15.500 6v6" c={RED} /></Glyph> },
  { label: 'Dashes one', icon: <Glyph><Stroke d="M1.500 1v16" /><Stroke d="M4.500 1v16M7.500 1v16M11.500 1v16M16.500 1v16" dash="3 1" /></Glyph> },
  { label: 'Dashes two', icon: <Glyph><Stroke d="M6.500 1v16" /><Stroke d="M1.500 1v16M11.500 1v16M16.500 1v16" dash="3 1" /></Glyph> },
  { label: 'Waves', icon: <Glyph soft><Stroke d="M0 13l4-4 3 3 4-4 3 3 3-3" /><text x="2" y="7" fill="#000" className="font-['Liberation_Sans'] text-[8px]">1</text><text x="6" y="16" fill="#000" className="font-['Liberation_Sans'] text-[8px]">2</text><text x="11" y="7" fill="#000" className="font-['Liberation_Sans'] text-[8px]">3</text></Glyph> },
  { label: 'Beam', icon: <Glyph><Stroke d="M9 1v16M6 1h6M6 17h6M6 5l6 3M12 5L6 8M6 10l6 3M12 10l-6 3" /></Glyph> },
  { label: 'Signal', icon: <Glyph><Stroke d="M2 1v16M1 10h16" /><Stroke d="M5 12l4-7 3 7h4" c="#000" /><Stroke d="M4 3h4M6 1v4" c={GREEN} /><Stroke d="M4 16h4" c={RED} /></Glyph> },
];

const TONES = {
  plain: 'border-[#222] bg-linear-to-b from-[#f2f2f4] to-[#b8bcc4]',
  yellow: 'border-[#6b5000] bg-linear-to-b from-[#ffe680] to-[#ffc400]',
  blue: 'border-[#7f9cb8] bg-[#9fc0de]',
};

function ToolButton({ label, tone = 'plain', children }: { label: string; tone?: keyof typeof TONES; children: ReactNode }) {
  return (
    <button type="button" aria-label={label} className={`flex h-[22px] w-[22px] shrink-0 items-center justify-center rounded-[3px] border ${TONES[tone]}`}>
      {children}
    </button>
  );
}

function WideButton({ className, children }: { className: string; children: ReactNode }) {
  return (
    <button type="button" className={`h-[22px] shrink-0 rounded-[3px] border border-[#222] bg-linear-to-b from-[#f2f2f4] to-[#b8bcc4] text-center text-[11px] font-bold text-black ${className}`}>
      {children}
    </button>
  );
}

/* ---------- application bars ---------- */

const MENUS = [
  ['', 'F', 'ile'], ['', 'E', 'dit'], ['', 'V', 'iew'], ['', 'R', 'eports'], ['Chart', 's', ''],
  ['', 'C', 'harting'], ['', 'D', 'rawing'], ['Tr', 'a', 'ding'], ['', 'H', 'elp'],
];

function TitleBar() {
  return (
    <header className="flex h-6 items-center gap-1.5 border-b border-[#dcdcdc] bg-[#f3f3f3] pl-0.5 text-[12px] text-[#868686]">
      <Omega />
      <h1 className="flex-1 whitespace-pre">Omega Chartz PLATINUM v8.2 (build 1820)  --  Chart Page: (unnamed) -- 15:12:14</h1>
      <div className="flex gap-[35px] pr-5">
        <button type="button" aria-label="Minimize"><svg className="h-[10px] w-[10px]"><path d="M0 5.500h10" stroke="#777" /></svg></button>
        <button type="button" aria-label="Restore"><svg className="h-[10px] w-[10px]"><path d="M.5 2.500h7v7h-7zM2.500 2V.5h7v7H8" stroke="#888" fill="none" /></svg></button>
        <button type="button" aria-label="Close"><svg className="h-[10px] w-[10px]"><path d="M0 0l10 10M10 0L0 10" stroke="#777" /></svg></button>
      </div>
    </header>
  );
}

function MenuBar() {
  return (
    <nav className="flex h-[27px] items-center bg-[#e0e0e0] text-[12px] text-black">
      <ul className="flex gap-2.5 pl-[9px]">
        {MENUS.map(([before, key, after]) => (
          <li key={before + key + after}>
            <button type="button">{before}<u>{key}</u>{after}</button>
          </li>
        ))}
      </ul>
      <div className="ml-[30px] h-5 border-l border-[#a0a0a0]" />
      <span className="pl-2 text-[#909090]">Status:</span>
    </nav>
  );
}

function ToolBar() {
  return (
    <div className="flex h-[26px] items-start gap-px border-b border-[#8894a4] bg-linear-to-b from-[#f4f4f4] to-[#b4bfcc] pt-px pl-px font-['Liberation_Sans']">
      {MAIN_TOOLS.map((t) => (
        <ToolButton key={t.label} label={t.label} tone={t.tone}>{t.icon}</ToolButton>
      ))}
      <button type="button" aria-label="Market" className="flex h-[22px] w-[45px] shrink-0 items-center justify-end rounded-[3px] border border-[#0a5a0a] bg-linear-to-r from-[#20c840] via-[#e8ffe8] to-[#20b030]">
        <svg viewBox="0 0 32 20" className="h-5 w-8" aria-hidden="true">
          <path d="M0 6h5v8H0z" fill="#111" />
          <path d="M5 8l3-2v8l-3-2z" fill="#444" />
          <path d="M8 1l3 3 2-3 2 3 3-2-2 5H10z" fill="#108020" />
          <ellipse cx="13" cy="11" rx="5" ry="6" fill="#e04020" stroke="#801000" />
          <path d="M10 8l6 6M16 8l-6 6" stroke="#ffd020" />
          <path d="M9 18h9" stroke="#111" strokeWidth="2" />
          <path d="M22 13h9l-4.500 5z" fill="#000" />
        </svg>
      </button>
      {STATUS_TOOLS.map((t) => (
        <ToolButton key={t.label} label={t.label}>{t.icon}</ToolButton>
      ))}
      <div className="relative mx-[2px] mt-0.5 h-[18px] w-[86px] shrink-0 border border-[#888] bg-white">
        <select aria-label="Bar interval" defaultValue="Daily" className="block h-4 w-full appearance-none bg-white pl-0.5 text-[11px] leading-4 text-black">
          <option>Daily</option>
          <option>Weekly</option>
          <option>Monthly</option>
        </select>
        <span className="pointer-events-none absolute inset-y-0 right-0 flex w-4 items-center justify-center border-r border-b border-l border-[#888] bg-[#f0f0f0]">
          <svg className="h-1 w-[7px]"><path d="M0 0h7L3.500 4z" /></svg>
        </span>
      </div>
      {STYLE_TOOLS.map((t) => (
        <ToolButton key={t.label} label={t.label} tone={t.tone}>{t.icon}</ToolButton>
      ))}
      <WideButton className="w-[68px]">Templates</WideButton>
      {CURSOR_TOOLS.map((t) => (
        <ToolButton key={t.label} label={t.label} tone={t.tone}>{t.icon}</ToolButton>
      ))}
      <WideButton className="w-[114px]">Sector</WideButton>
      <WideButton className="w-[114px]">Subsector</WideButton>
      <WideButton className="w-[68px]">Component</WideButton>
    </div>
  );
}

/* ---------- chart window ---------- */

const RAISED = 'border border-t-white border-l-white border-r-[#555] border-b-[#555] shadow-[inset_-1px_-1px_0_#a8a8a8]';

function WindowTitle({ chart }: { chart: Chart }) {
  const box = `flex h-[18px] items-center justify-center ${RAISED}`;
  return (
    <div className="flex h-[23px] shrink-0 items-center bg-linear-to-r from-[#bccbda] to-[#d9e7f5] pr-[3px] pl-[3px] text-[12px] text-[#111]">
      <Omega />
      <h2 className="ml-2 flex-1 overflow-hidden whitespace-pre">
        {`${chart.symbol}:  01/09/2022 - 20/10/2025  (Daily bars)   ${chart.name}  --  Template: RR POP 2`}
      </h2>
      <div className="flex gap-px font-['DejaVu_Sans'] text-[11px] font-bold">
        <button type="button" className={`${box} w-5 ${chart.flagged ? 'bg-[#ff00ff] text-white' : 'bg-[#f0f0f0]'}`}>S</button>
        <button type="button" className={`${box} w-5 bg-[#f0f0f0]`}>P</button>
        <button type="button" aria-label="Pop out" className={`${box} w-5 bg-[#f0f0f0]`}>
          <svg className="h-[11px] w-[11px]"><path d="M6 3.500H.5v7h7V6" stroke="#555" fill="none" /><path d="M3 8l6-6M5.500 1H10v4.500" stroke="#e00000" strokeWidth="2" fill="none" /></svg>
        </button>
      </div>
      <div className="ml-1.5 flex">
        <button type="button" aria-label="Minimize window" className={`${box} w-5 bg-[#f0f0f0]`}>
          <svg className="h-[11px] w-[11px]"><path d="M2 10h7" stroke="#000" strokeWidth="2" /></svg>
        </button>
        <button type="button" aria-label="Maximize window" className={`${box} w-5 bg-[#f0f0f0]`}>
          <svg className="h-[11px] w-[11px]"><path d="M.5 1v9.500h10V1M0 1h11" stroke="#000" fill="none" /><path d="M0 1h11" stroke="#000" strokeWidth="2" /></svg>
        </button>
        <button type="button" aria-label="Close window" className={`${box} ml-0.5 w-5 bg-[#f0f0f0]`}>
          <svg className="h-[9px] w-[9px]"><path d="M0 0l9 9M9 0L0 9" stroke="#000" strokeWidth="2" /></svg>
        </button>
      </div>
    </div>
  );
}

function Plot({ chart }: { chart: Chart }) {
  const y = (v: number) => Math.round((v - chart.origin) / 3);
  const x = (i: number) => chart.firstX + i * chart.step;
  const points = (values: number[]) => values.map((v, i) => `${x(i) + 0.5},${y(v)}`).join(' ');

  return (
    <svg className="absolute inset-0 h-full w-full overflow-hidden font-['Liberation_Sans'] text-[12px] font-bold" shapeRendering="crispEdges">
      {chart.annotated && (
        <g>
          <path d="M0 96.500h860M0 356.500h860" stroke={MAROON} strokeDasharray="10 6 3 6" />
          <rect x="460.500" y="88.500" width="204" height="8" fill="#80ffff" stroke={BLUE} />
        </g>
      )}

      {chart.leftLevels?.map((l) => (
        <g key={l.label} fill={l.color}>
          <rect x="0" y={y(l.y) - 1} width="2" height={l.bold ? 2 : 1} />
          <text x="5" y={y(l.y) + 4}>{l.label}</text>
        </g>
      ))}

      {chart.closes && <polyline points={points(chart.closes)} stroke="#000" fill="none" />}
      {chart.candles?.map(([high, top, bottom, low, down], i) => (
        <g key={i}>
          <rect x={x(i)} y={y(high)} width="1" height={Math.max(1, y(low) - y(high))} fill="#000" />
          {y(bottom) - y(top) > 2 && !down ? (
            <rect x={x(i) - 1.5} y={y(top) + 0.5} width={chart.bodyWidth - 1} height={y(bottom) - y(top)} fill="#fff" stroke="#000" />
          ) : (
            <rect x={x(i) - 2} y={y(top)} width={chart.bodyWidth} height={Math.max(1, y(bottom) - y(top))} fill="#000" />
          )}
        </g>
      ))}

      {chart.levels.map((l) => (
        <g key={l.label}>
          <rect x={chart.lineStart} y={y(l.y) - (l.bold ? 1 : 0)} width={chart.lineEnd - chart.lineStart} height={l.bold ? 2 : 1} fill={l.color} />
          <text x={chart.lineEnd + 3} y={y(l.y) + 5} fill={l.color}>{l.label}</text>
          {l.ratio && <text x="170" y={y(l.y) + 5} textAnchor="end" fill={l.color}>{l.ratio}</text>}
        </g>
      ))}

      <g fill="none" strokeWidth="2">
        <polyline points={points(chart.slow)} stroke={MAROON} />
        <polyline points={points(chart.mid)} stroke={GREEN} />
        <polyline points={points(chart.fast)} stroke={MAGENTA} />
      </g>

      {chart.annotated && (
        <g stroke={GREEN} fill={GREEN}>
          <path d="M242 378L294 210M242 378L491 231M357 378L339 288" fill="none" />
          <path d="M291 215l5-9 2 9zM336 292l3-8 4 8zM484 229h8l-3 7z" />
          <path d="M0 378.500h508" />
        </g>
      )}

      {chart.marks.map((m) => (
        <g key={m.letter}>
          <path d={`M${m.x} 360l8 8-8 8-8-8z`} fill="none" stroke="#000" shapeRendering="auto" />
          <text x={m.x} y="372" textAnchor="middle" className="font-['Liberation_Serif'] font-normal">{m.letter}</text>
        </g>
      ))}
      <text x="4" y="375" className="text-[10px] font-normal">© GenesisFT</text>
    </svg>
  );
}

function PriceAxis({ chart }: { chart: Chart }) {
  const { axis } = chart;
  const y = (v: number) => Math.round((v - chart.origin) / 3);
  const at = (price: number) => y(axis.y + (axis.price - price) * axis.perUnit);
  const ticks: number[] = [];
  for (let p = axis.from; p <= axis.to; p += axis.minor) ticks.push(p);
  const labels = ticks.filter((p) => p % axis.major === 0 && at(p) > 20);

  return (
    <svg className="h-full w-[69px] shrink-0 overflow-visible bg-[#e0e0e0] font-['DejaVu_Sans']" shapeRendering="crispEdges">
      {ticks.map((p) => (
        <rect key={p} x={p % axis.major === 0 ? -10 : -5} y={at(p)} width={p % axis.major === 0 ? 10 : 5} height="1" fill="#808080" />
      ))}
      {labels.map((p) => (
        <text key={p} x="5" y={at(p) + 6} fill={NAVY} className="text-[15px]">{p.toFixed(2)}</text>
      ))}
      {chart.tags.map((t) => (
        <g key={t.text}>
          <rect x="0" y={y(t.y) - 11} width={t.width} height="23" fill={t.color} />
          <text x="0" y={y(t.y) + 6} fill="#fff" className="text-[14px]">{t.text}</text>
        </g>
      ))}
    </svg>
  );
}

function ScrollBar() {
  return (
    <div className="flex h-4 shrink-0 border-t border-b border-[#a0a0a0] bg-white">
      <button type="button" aria-label="Scroll left" className={`flex w-4 items-center justify-center bg-[#f0f0f0] pr-1 ${RAISED}`}>
        <svg className="h-[7px] w-1"><path d="M4 0v7L0 3.500z" /></svg>
      </button>
      <span className="flex-1" />
      <span className={`w-[7px] bg-[#f0f0f0] ${RAISED}`} />
      <button type="button" aria-label="Scroll right" className={`mr-0.5 flex w-4 items-center justify-center bg-[#f0f0f0] ${RAISED}`}>
        <svg className="h-[7px] w-1"><path d="M0 0v7l4-3.500z" /></svg>
      </button>
    </div>
  );
}

function ChartWindow({ chart }: { chart: Chart }) {
  return (
    <section className="flex min-w-0 border-t border-r border-b border-l border-t-[#707070] border-r-[#b4b4b4] border-b-[#b4b4b4] border-l-[#707070] bg-[#f2f6fb] pt-2 pr-1.5 pb-1.5 pl-2">
      <div className="flex min-w-0 flex-1 flex-col">
        <WindowTitle chart={chart} />
        <p className="h-[15px] shrink-0 overflow-hidden bg-[#e0e0e0] pl-1.5 font-['Liberation_Sans'] text-[13px] leading-[15px] font-bold whitespace-pre text-[#000080]">
          <span className="font-normal">Tue</span>{`  09/09/2025:  ${chart.info}`}
        </p>
        <div className="flex min-h-[380px] flex-1 overflow-hidden">
          <div className="relative min-w-0 flex-1 border-r border-b border-[#808080] bg-white">
            <div className="font-['DejaVu_Sans'] text-[15px] leading-[23px] font-bold">
              <div className="flex justify-end gap-[11px] pr-[19px] whitespace-nowrap">
                <span className="text-[#c000c0]">8 EMA (C,8,F) = {chart.ema8}</span>
                <span className="text-[#008000]">21 EMA (C,21,F) = {chart.ema21}</span>
                <span className="text-black">20/10/2025 = {chart.last}</span>
              </div>
              <div className="pl-1 text-[#800000]">55 EMA (C,55,F) = {chart.ema55}</div>
            </div>
            <Plot chart={chart} />
          </div>
          <PriceAxis chart={chart} />
        </div>
        <div className="relative h-6 shrink-0 bg-[#e0e0e0]">
          <svg className="h-6 w-full font-['DejaVu_Sans'] text-[15px]">
            {chart.months.map((m) => (
              <text key={m.text} x={m.x} y="18" fill={NAVY}>{m.text}</text>
            ))}
          </svg>
          {chart.tooltip && (
            <span className="absolute top-2 left-[317px] h-4 border border-[#646464] bg-[#ffffe1] px-[3px] text-[11px] leading-[14px] text-black">
              {chart.tooltip}
            </span>
          )}
        </div>
        <ScrollBar />
      </div>
    </section>
  );
}

export default function App() {
  return (
    <div className="flex min-h-screen flex-col bg-[#f0f0f0] font-['Roboto','Noto_Sans',sans-serif]">
      <TitleBar />
      <MenuBar />
      <ToolBar />
      <div className="flex flex-1">
        <main className="grid flex-1 grid-cols-2 grid-rows-2 pt-px pr-1 pb-1.5 pl-[3px]">
          {CHARTS.map((chart) => (
            <ChartWindow key={chart.symbol} chart={chart} />
          ))}
        </main>
        <aside aria-label="Drawing tools" className="flex w-[23px] shrink-0 flex-col gap-px bg-[#c8ced8] pt-px pl-px">
          {SIDE_TOOLS.map((t) => (
            <ToolButton key={t.label} label={t.label} tone={t.active ? 'blue' : 'plain'}>{t.icon}</ToolButton>
          ))}
        </aside>
      </div>
    </div>
  );
}
